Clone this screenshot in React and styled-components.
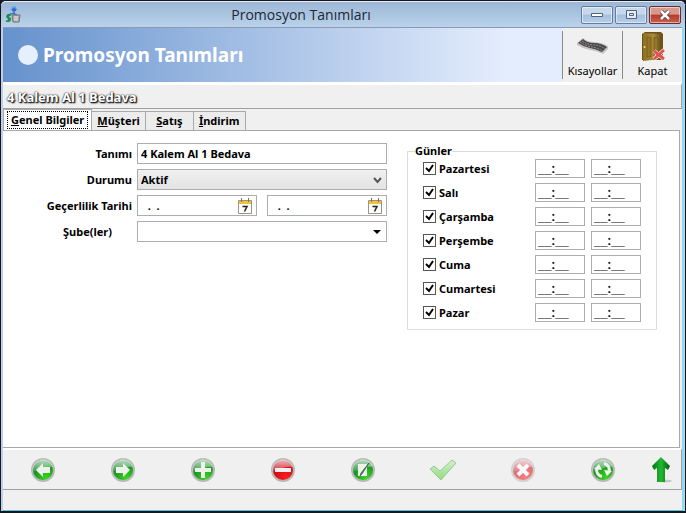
import React, { useState } from "react";
import styled, { createGlobalStyle, css } from "styled-components";

const GlobalStyle = createGlobalStyle`
  * {
    box-sizing: border-box;
  }
  body {
    margin: 0;
    background: #1b1a1f;
    font-family: "Noto Sans", "DejaVu Sans", sans-serif;
    font-size: 11px;
    line-height: 16px;
    color: #000;
  }
  input,
  select,
  button {
    font: inherit;
    color: inherit;
    margin: 0;
  }
`;

const DAYS = [
  "Pazartesi",
  "Salı",
  "Çarşamba",
  "Perşembe",
  "Cuma",
  "Cumartesi",
  "Pazar"
];

const TABS = ["Genel Bilgiler", "Müşteri", "Satış", "İndirim"];

// icons
const AppIcon = () => (
  <svg width="16" height="17" viewBox="0 0 16 17">
    <circle cx="9" cy="3" r="2.5" fill="#2c6fd0" />
    <path d="M5 4q4-5 8 0" stroke="#7db2ee" fill="none" />
    <path d="M9 5v4M4 9q3-3 8 0" stroke="#3b78c8" strokeWidth="1.5" fill="none" />
    <path d="M6 9q-4-1-4 1.500q0 1.500 2 1.500t1 2.500q-1 1-4 .5M3.500 8v8" stroke="#168c45" strokeWidth="1.500" fill="none" />
    <path d="M7 9h8l-1 7H8z" fill="#a6a6a6" stroke="#777" />
    <path d="M10 10v5M12 10v5" stroke="#eee" />
  </svg>
);

const KeyboardIcon = () => (
  <svg width="34" height="32" viewBox="0 0 34 32">
    <path d="M1 12l6-5q4 4 11 4t14 4v3l-5 5q-6-3-13-4T1 14z" fill="#c4c4c4" />
    <path d="M2 12l5-4q4 4 11 4t13 4l-5 5q-6-3-12-4T2 12z" fill="#4a4848" />
    <path
      d="M4 11q6 4 12 5t11 4M6 10q6 4 12 4t11 4"
      stroke="#989494"
      strokeDasharray="2 1"
      fill="none"
    />
  </svg>
);

const DoorIcon = () => (
  <svg width="28" height="32" viewBox="0 0 28 32">
    <defs>
      <linearGradient id="door">
        <stop offset="0" stopColor="#8f6f22" />
        <stop offset=".6" stopColor="#a98d3e" />
        <stop offset="1" stopColor="#69501a" />
      </linearGradient>
    </defs>
    <path d="M3 3l3-2h16l2 2v24l-2 2H3z" fill="#6c521b" />
    <path d="M4 2l18 1v25L4 30z" fill="url(#door)" />
    <path d="M8 6l4 .5v19L8 26zM15 6.500l4 .5v18l-4 .5z" fill="#957628" stroke="#715719" strokeWidth=".7" />
    <circle cx="5.500" cy="16" r="1" fill="#f1dc8f" />
    <path d="M15 20l10 8M25 19L15 28" stroke="#fff" strokeWidth="4" />
    <path d="M15 20l10 8M25 19L15 28" stroke="#e45050" strokeWidth="3" />
  </svg>
);

const CalendarIcon = () => (
  <svg width="14" height="16" viewBox="0 0 14 16">
    <path d="M.5 2.500h13v13H.5z" fill="#fff" stroke="#9b927f" />
    <path d="M1 3h12v3H1z" fill="#f3c238" />
    <path d="M3.500 0v4M10.500 0v4" stroke="#7b7468" />
    <path d="M4.500 8.500h4.500l-2.500 5" stroke="#222" strokeWidth="1.500" fill="none" />
  </svg>
);

const Disc = ({ id, light, dark, faded, children }) => (
  <svg width="24" height="24" viewBox="0 0 24 24" opacity={faded ? 0.55 : 1}>
    <defs>
      <radialGradient id={id} cx=".65" cy=".85" r=".8">
        <stop offset="0" stopColor={light} />
        <stop offset="1" stopColor={dark} />
      </radialGradient>
      <linearGradient id={`${id}-shine`} x2="0" y2="1">
        <stop offset="0" stopColor="#fff" stopOpacity=".75" />
        <stop offset="1" stopColor="#fff" stopOpacity=".15" />
      </linearGradient>
    </defs>
    <circle cx="12" cy="12" r="11" fill={`url(#${id})`} stroke="#b5bab5" strokeWidth="2" />
    <path d="M1.500 13A10.500 10.500 0 0 1 22 9Q15 8 10 11T1.500 13z" fill={`url(#${id}-shine)`} />
    {children}
  </svg>
);

const Green = props => <Disc light="#3bd51c" dark="#0a7a28" {...props} />;
const Red = props => <Disc light="#ff2020" dark="#c00010" {...props} />;

const CheckIcon = () => (
  <svg width="28" height="24" viewBox="0 0 28 24">
    <defs>
      <linearGradient id="check" x2="0" y2="1">
        <stop offset="0" stopColor="#d5efcf" />
        <stop offset="1" stopColor="#8fdc7c" />
      </linearGradient>
    </defs>
    <path d="M1 11l4-3 6 5L23 2l4 3-15 17z" fill="url(#check)" stroke="#9ccb92" />
  </svg>
);

const UpIcon = () => (
  <svg width="22" height="28" viewBox="0 0 22 28">
    <defs>
      <linearGradient id="up">
        <stop offset="0" stopColor="#067016" />
        <stop offset=".5" stopColor="#22ba32" />
        <stop offset="1" stopColor="#04600e" />
      </linearGradient>
    </defs>
    <ellipse cx="14" cy="25" rx="7" ry="1.500" fill="#c4c8c4" />
    <path d="M10 1l9 9-2 4-3-2v14H6V12l-3 2-2-4z" fill="url(#up)" />
  </svg>
);

const ACTIONS = [
  {
    label: "Önceki",
    icon: (
      <Green id="prev">
        <path d="M5 12l7-7v4h7v6h-7v4z" fill="#eef3ea" />
      </Green>
    )
  },
  {
    label: "Sonraki",
    icon: (
      <Green id="next">
        <path d="M19 12l-7-7v4H5v6h7v4z" fill="#eef3ea" />
      </Green>
    )
  },
  {
    label: "Yeni",
    icon: (
      <Green id="new">
        <path d="M10 4h4v6h6v4h-6v6h-4v-6H4v-4h6z" fill="#eef3ea" />
      </Green>
    )
  },
  {
    label: "Sil",
    icon: (
      <Red id="delete">
        <path d="M4 10h16v4H4z" fill="#f6f1f1" />
      </Red>
    )
  },
  {
    label: "Düzenle",
    icon: (
      <Green id="edit">
        <path d="M7 6h9v12H7z" fill="#eef3ea" />
        <path d="M18 5l-7 11-2 2 1-3z" fill="#647b66" stroke="#2e5936" strokeWidth=".7" />
      </Green>
    )
  },
  { label: "Kaydet", icon: <CheckIcon />, disabled: true },
  {
    label: "Vazgeç",
    disabled: true,
    icon: (
      <Red id="cancel" faded>
        <path d="M7 7l10 10M17 7L7 17" stroke="#fff" strokeWidth="4" />
      </Red>
    )
  },
  {
    label: "Yenile",
    icon: (
      <Green id="refresh">
        <path
          d="M11 18.500A6.500 6.500 0 0 1 6 10M13 5.500A6.500 6.500 0 0 1 18 14"
          stroke="#eef3ea"
          strokeWidth="3"
          fill="none"
        />
        <path d="M3 11l5-5 3 6zM21 13l-5 5-3-6z" fill="#eef3ea" />
      </Green>
    )
  },
  { label: "Yukarı", icon: <UpIcon /> }
];

const DateField = ({ id, label }) => (
  <FieldBox>
    <BareInput id={id} aria-label={label} defaultValue="  .  ." />
    <IconButton type="button" aria-label="Takvim">
      <CalendarIcon />
    </IconButton>
  </FieldBox>
);

const DayRow = ({ name, index }) => (
  <Day>
    <DayLabel htmlFor={`day-${index}`}>
      <Tick id={`day-${index}`} type="checkbox" defaultChecked />
      {name}
    </DayLabel>
    <TimeInput aria-label={`${name} başlangıç`} defaultValue="__:__" />
    <TimeInput aria-label={`${name} bitiş`} defaultValue="__:__" />
  </Day>
);

const App = () => {
  const [active, setActive] = useState(0);

  return (
    <Window>
      <GlobalStyle />
      <TitleBar>
        <AppIcon />
        <Title>Promosyon Tanımları</Title>
        <WindowButtons>
          <WindowButton aria-label="Simge durumuna küçült">
            <svg width="12" height="6">
              <path d="M.5 1.500h11v3H.5z" fill="#fff" stroke="#52617a" />
            </svg>
          </WindowButton>
          <WindowButton aria-label="Ekranı kapla">
            <svg width="11" height="9">
              <path d="M.5.5h10v8H.5zM3.500 3.500h4v2h-4z" fill="#e4edf8" stroke="#52617a" />
            </svg>
          </WindowButton>
          <WindowButton $close aria-label="Pencereyi kapat">
            <svg width="12" height="10" viewBox="0 0 12 10">
              <path d="M2 1l8 8M10 1L2 9" stroke="#4b3943" strokeWidth="4" />
              <path d="M2 1l8 8M10 1L2 9" stroke="#fff" strokeWidth="2.500" />
            </svg>
          </WindowButton>
        </WindowButtons>
      </TitleBar>

      <Client>
        <Header>
          <Banner>
            <Dot />
            <Heading>Promosyon Tanımları</Heading>
          </Banner>
          <ToolButton>
            <KeyboardIcon />
            Kısayollar
          </ToolButton>
          <ToolButton>
            <DoorIcon />
            Kapat
          </ToolButton>
        </Header>

        <RecordName>4 Kalem Al 1 Bedava</RecordName>

        <Tabs role="tablist">
          {TABS.map((tab, i) => (
            <Tab
              key={tab}
              role="tab"
              aria-selected={i === active}
              $active={i === active}
              onClick={() => setActive(i)}
            >
              <TabText $active={i === active}>
                <u>{tab[0]}</u>
                {tab.slice(1)}
              </TabText>
            </Tab>
          ))}
        </Tabs>

        <Page>
          <Form>
            <Label htmlFor="name">Tanımı</Label>
            <TextInput id="name" defaultValue="4 Kalem Al 1 Bedava" />

            <Label htmlFor="status">Durumu</Label>
            <SelectBox>
              <Select id="status" $filled>
                <option>Aktif</option>
              </Select>
              <SelectArrow width="9" height="8">
                <path d="M1 2l3.500 4L8 2" stroke="#555" strokeWidth="2" fill="none" />
              </SelectArrow>
            </SelectBox>

            <Label htmlFor="from">Geçerlilik Tarihi</Label>
            <Dates>
              <DateField id="from" label="Geçerlilik başlangıcı" />
              <DateField id="to" label="Geçerlilik bitişi" />
            </Dates>

            <Label htmlFor="branches" $inset>
              Şube(ler)
            </Label>
            <SelectBox>
              <Select id="branches">
                <option />
              </Select>
              <SelectArrow width="9" height="8">
                <path d="M0 2h8L4 6z" />
              </SelectArrow>
            </SelectBox>
          </Form>

          <Days>
            <Legend>Günler</Legend>
            {DAYS.map((day, i) => (
              <DayRow key={day} name={day} index={i} />
            ))}
          </Days>
        </Page>

        <Toolbar>
          {ACTIONS.map(({ label, icon, disabled }) => (
            <IconButton key={label} aria-label={label} disabled={disabled}>
              {icon}
            </IconButton>
          ))}
        </Toolbar>
        <StatusBar />
      </Client>
    </Window>
  );
};

const center = css`
  display: flex;
  align-items: center;
  justify-content: center;
`;

const field = css`
  width: 100%;
  height: 21px;
  border: 1px solid #abadb3;
  border-radius: 0;
  background: #fff;
  font-weight: bold;
`;

const Window = styled.div`
  display: flex;
  flex-direction: column;
  min-height: 100vh;
  border: 1px solid #17171b;
  border-bottom-width: 2px;
  border-radius: 6px 6px 0 0;
  background: #b9d1ea;
`;

const TitleBar = styled.header`
  display: grid;
  grid-template-columns: 24px 1fr 108px;
  align-items: center;
  height: 26px;
  padding: 0 4px;
  border-top: 1px solid #e5eef8;
  border-radius: 5px 5px 0 0;
  background: linear-gradient(#9bb7d5, #bad2eb);
`;

const Title = styled.div`
  font-family: "Open Sans", "Noto Sans", sans-serif;
  font-size: 14px;
  text-align: center;
  color: #1c2733;
`;

const WindowButtons = styled.div`
  display: flex;
  justify-content: flex-end;
  gap: 2px;
`;

const WindowButton = styled.button`
  ${center}
  width: 32px;
  height: 18px;
  padding: 0;
  border: 1px solid ${p => (p.$close ? "#6b2c2c" : "#647d9e")};
  border-radius: 2px;
  box-shadow: inset 0 0 0 1px rgba(255, 255, 255, 0.5);
  background: ${p =>
    p.$close
      ? "linear-gradient(#d99a8e 45%, #b83a2a 50%, #c9614c)"
      : "linear-gradient(#c6d8ec 45%, #a5bfdc 50%, #b6cee8)"};
`;

const Client = styled.main`
  display: flex;
  flex: 1;
  flex-direction: column;
  margin: 0 1px 0 2px;
  border-bottom: 1px solid #4fc6e6;
  border-right: 2px solid #8edcf0;
  background: #f0f0f0;
`;

const Header = styled.div`
  display: flex;
  height: 56px;
  border-top: 1px solid #8d9bb0;
  border-bottom: 1px solid #fff;
`;

const Banner = styled.div`
  display: flex;
  flex: 1;
  align-items: center;
  gap: 5px;
  padding-left: 15px;
  background: linear-gradient(90deg, #6592cd, #e4edfd 90%);
`;

const Dot = styled.span`
  width: 20px;
  height: 20px;
  border-radius: 50%;
  background: #e6effe;
`;

const Heading = styled.h1`
  margin: 0;
  font-size: 19px;
  line-height: 24px;
  color: #fff;
`;

const ToolButton = styled.button`
  display: flex;
  flex-direction: column;
  align-items: center;
  width: 60px;
  margin: 3px 0;
  padding: 0;
  border: 0;
  border-left: 1px solid #8b8b8b;
  background: none;
`;

const RecordName = styled.div`
  height: 26px;
  padding-left: 4px;
  border-top: 2px solid #fff;
  border-right: 1px solid #a0a0a0;
  border-bottom: 1px solid #a0a0a0;
  font-size: 13px;
  font-weight: bold;
  line-height: 24px;
  color: #fff;
  text-shadow: 1px 1px 1px #222, 1px 1px 2px #222, 0 0 1px #333, 0 0 2px #555;
`;

const Tabs = styled.div`
  display: flex;
  align-items: flex-end;
  height: 21px;
`;

const Tab = styled.button`
  height: ${p => (p.$active ? 21 : 19)}px;
  padding: 0 ${p => (p.$active ? 4 : 5)}px;
  border: 1px solid #a9a9a9;
  border-left-width: ${p => (p.$active ? 1 : 0)}px;
  border-bottom-width: 0;
  background: ${p => (p.$active ? "#fff" : "#ececec")};
  font-weight: bold;
  min-width: 48px;
`;

const TabText = styled.span`
  display: block;
  padding: 0 ${p => (p.$active ? 3 : 0)}px;
  outline: ${p => (p.$active ? "1px dotted #000" : "none")};
`;

const Page = styled.section`
  display: flex;
  flex: 1;
  align-items: flex-start;
  gap: 20px;
  margin-right: 2px;
  padding: 12px 22px 0 30px;
  border: 1px solid #a9a9a9;
  border-left: 0;
  background: #fff;
`;

const Form = styled.div`
  display: grid;
  flex: 1;
  min-width: 0;
  grid-template-columns: 99px minmax(0, 1fr);
  grid-auto-rows: 21px;
  align-items: center;
  gap: 5px;
`;

const Label = styled.label`
  padding-right: ${p => (p.$inset ? 20 : 0)}px;
  font-weight: bold;
  text-align: right;
  white-space: nowrap;
`;

const TextInput = styled.input`
  ${field}
  padding: 0 3px;
`;

const SelectBox = styled.div`
  position: relative;
`;

const Select = styled.select`
  ${field}
  display: block;
  appearance: none;
  padding: 0 20px 0 3px;
  background: ${p => (p.$filled ? "linear-gradient(#f0f0f0, #e3e3e3)" : "#fff")};
`;

const SelectArrow = styled.svg`
  position: absolute;
  top: 7px;
  right: 5px;
  pointer-events: none;
`;

const Dates = styled.div`
  display: grid;
  grid-template-columns: repeat(2, minmax(0, 1fr));
  gap: 10px;
`;

const FieldBox = styled.div`
  ${field}
  display: flex;
  align-items: center;
  padding: 0 4px;
`;

const BareInput = styled.input`
  flex: 1;
  min-width: 0;
  padding: 0;
  border: 0;
  background: none;
`;

const IconButton = styled.button`
  ${center}
  padding: 0;
  border: 0;
  background: none;
`;

const Days = styled.fieldset`
  flex: none;
  display: grid;
  gap: 5px;
  width: 250px;
  margin: 0;
  padding: 0 15px 7px;
  border: 1px solid #dcdcdc;
`;

const Legend = styled.legend`
  margin-left: -8px;
  padding: 0;
  font-weight: bold;
`;

const Day = styled.div`
  display: grid;
  grid-template-columns: 1fr 50px 50px;
  align-items: center;
  gap: 6px;
`;

const DayLabel = styled.label`
  display: flex;
  align-items: center;
  gap: 3px;
  font-weight: bold;
`;

const Tick = styled.input`
  appearance: none;
  width: 13px;
  height: 13px;
  border: 1px solid #555;
  background: #fff;

  &:checked {
    background: #fff
      url("data:image/svg+xml,%3Csvg xmlns='http://www.w3.org/2000/svg' viewBox='0 0 11 11'%3E%3Cpath d='M2 5l3 3 4-6' fill='none' stroke='black' stroke-width='2'/%3E%3C/svg%3E");
  }
`;

const TimeInput = styled.input`
  ${field}
  height: 19px;
  padding: 0 2px;
  font-family: "Liberation Sans", Arial, sans-serif;
  font-size: 12px;
`;

const Toolbar = styled.nav`
  display: grid;
  grid-template-columns: repeat(8, 80fr) 38fr;
  height: 42px;
  border-top: 2px solid #fff;
  border-right: 1px solid #a0a0a0;
  border-bottom: 1px solid #a0a0a0;
`;

const StatusBar = styled.footer`
  height: 20px;
`;

export default App;
